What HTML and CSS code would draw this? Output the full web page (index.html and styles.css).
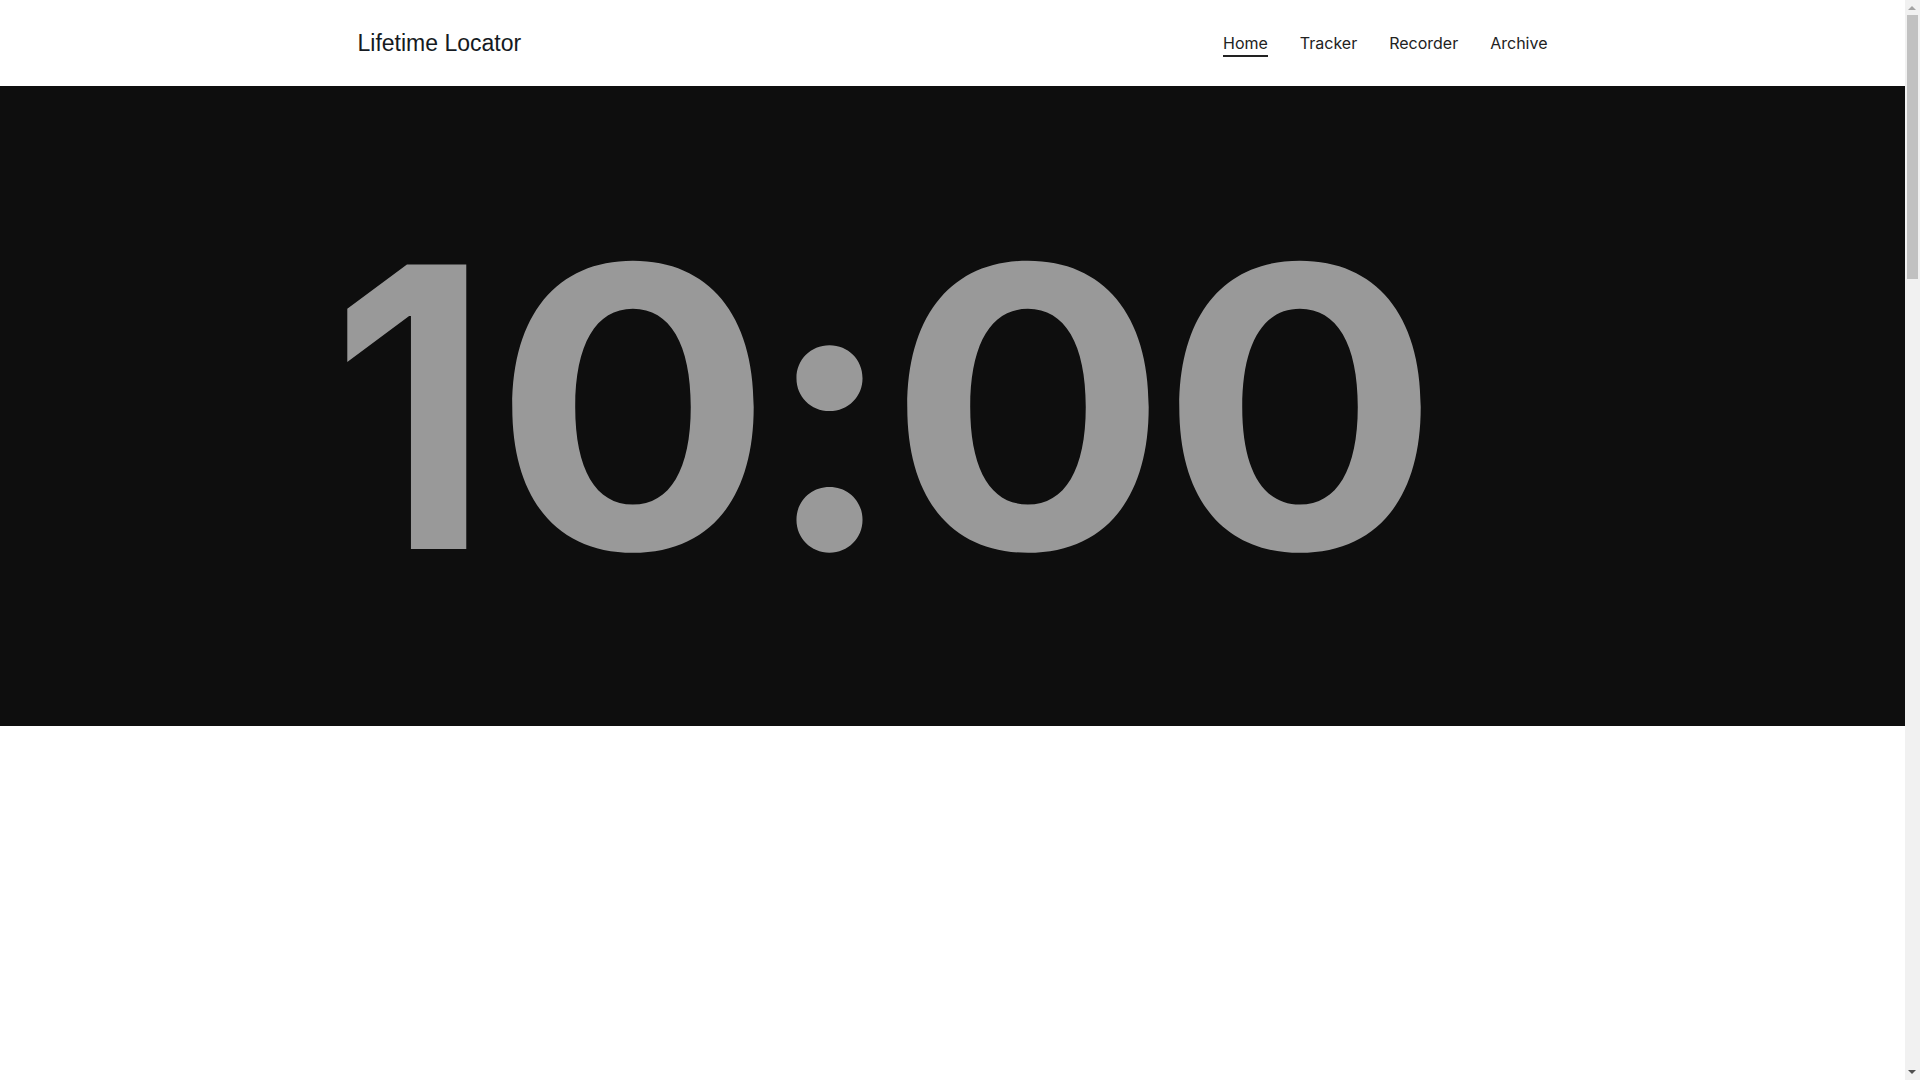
FILE: index.html
```html
<!DOCTYPE html>
<html lang="en">
<head>
<meta charset="utf-8">
<title>Lifetime Locator</title>
<link rel="stylesheet" href="styles.css">
</head>
<body>
<header class="site-header">
  <div class="container header-inner">
    <a class="brand" href="#">Lifetime Locator</a>
    <nav class="nav">
      <a class="nav-link active" href="#">Home</a>
      <a class="nav-link" href="#">Tracker</a>
      <a class="nav-link" href="#">Recorder</a>
      <a class="nav-link" href="#">Archive</a>
    </nav>
  </div>
</header>
<section class="hero">
  <div class="container">
    <div class="clock"><span class="d d1">1</span><span class="d d0a">0</span><span class="d colon">:</span><span class="d d0b">0</span><span class="d d0c">0</span></div>
  </div>
</section>
<main class="below"></main>
<div class="scrollbar" aria-hidden="true">
  <span class="sb-up"></span>
  <span class="sb-thumb"></span>
  <span class="sb-down"></span>
</div>
</body>
</html>
```

FILE: styles.css
```css
html, body {
  margin: 0;
  padding: 0;
  background: #ffffff;
}
body {
  font-family: "Inter", "Liberation Sans", sans-serif;
  color: #1e1e1e;
  padding-right: 15px;
}
.container {
  width: 1190px;
  margin: 0 auto;
}
.site-header {
  height: 86px;
  background: #ffffff;
}
.header-inner {
  height: 100%;
  display: flex;
  align-items: center;
  justify-content: space-between;
}
.brand {
  font-family: "Liberation Sans", Arial, sans-serif;
  font-size: 23px;
  color: #151a22;
  text-decoration: none;
}
.nav {
  display: flex;
  gap: 32px;
}
.nav-link {
  font-size: 16px;
  color: #222222;
  text-decoration: none;
  padding-bottom: 2px;
  border-bottom: 2px solid transparent;
  margin-top: 4px;
}
.nav-link.active {
  border-bottom-color: #222222;
}
.hero {
  height: 640px;
  background: #0e0e0e;
  display: flex;
  align-items: center;
}
.clock {
  display: flex;
  align-items: center;
  font-family: "Inter", sans-serif;
  font-weight: 700;
  font-size: 391px;
  line-height: 1;
  color: #999999;
}
.d {
  display: inline-flex;
  justify-content: center;
  transform: scaleX(1.06);
}
.d1 {
  width: 105px;
  transform: scaleX(0.95);
}
.d0a {
  width: 340px;
}
.colon {
  width: 54px;
  transform: none;
}
.d0b {
  width: 342px;
}
.d0c {
  width: 202px;
}
.below {
  height: 3580px;
}
.scrollbar {
  position: fixed;
  top: 0;
  right: 0;
  width: 15px;
  height: 100vh;
  background: #f1f1f1;
}
.sb-up,
.sb-down {
  position: absolute;
  left: 3px;
  width: 0;
  height: 0;
  border-left: 4.5px solid transparent;
  border-right: 4.5px solid transparent;
}
.sb-up {
  top: 6px;
  border-bottom: 4px solid #a3a3a3;
}
.sb-down {
  bottom: 6px;
  border-top: 4px solid #505050;
}
.sb-thumb {
  position: absolute;
  top: 15px;
  left: 2px;
  width: 11px;
  height: 264px;
  background: #c1c1c1;
}
```
